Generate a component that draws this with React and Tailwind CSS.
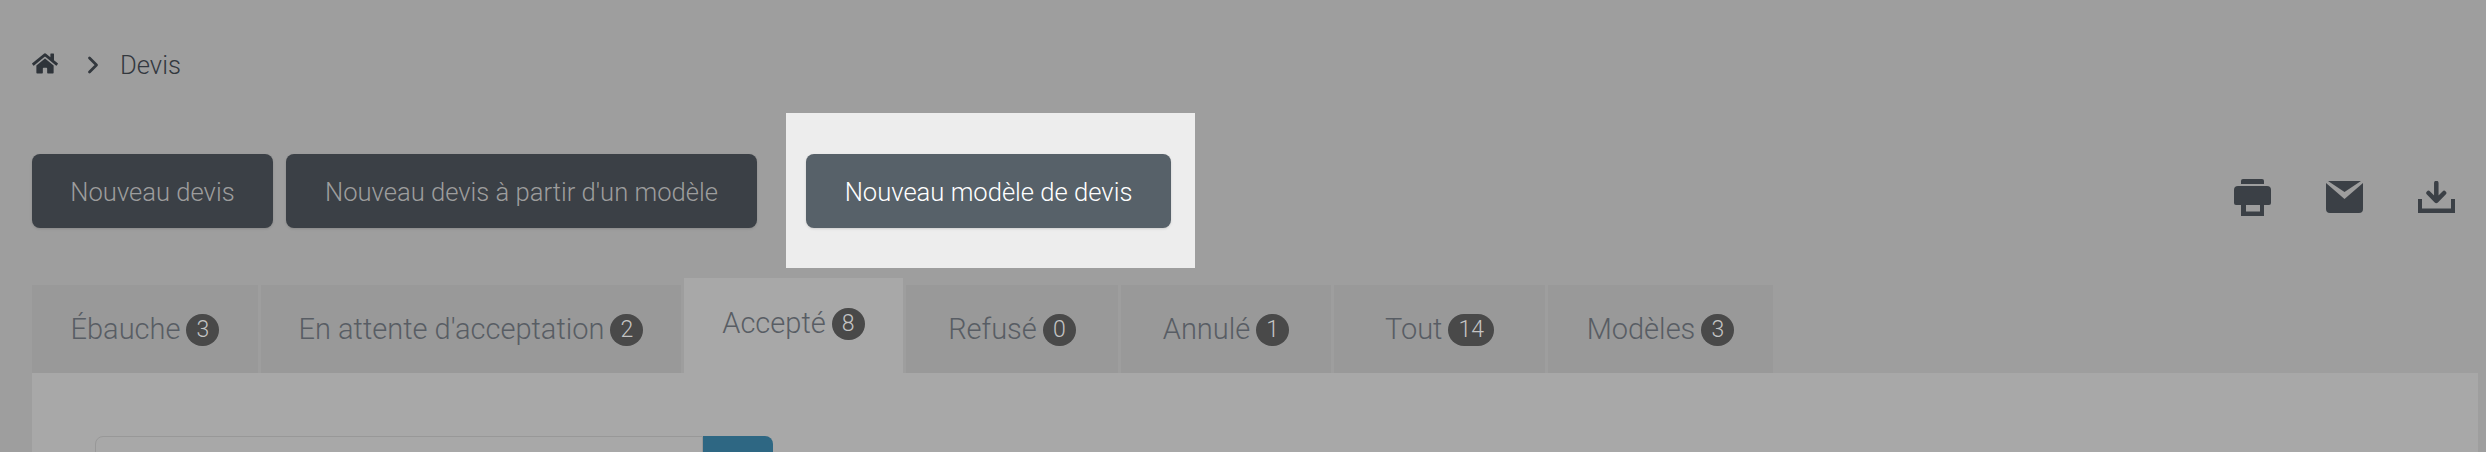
import { FaHome } from 'react-icons/fa';
import { ChevronRight } from 'lucide-react';

const tabs = [
  { label: 'Ébauche', count: 3, width: 'w-[226px]' },
  { label: "En attente d'acceptation", count: 2, width: 'w-[420px]' },
  { label: 'Accepté', count: 8, width: 'w-[219px]', active: true },
  { label: 'Refusé', count: 0, width: 'w-[212px]' },
  { label: 'Annulé', count: 1, width: 'w-[210px]' },
  { label: 'Tout', count: 14, width: 'w-[211px]' },
  { label: 'Modèles', count: 3, width: 'w-[225px]' },
];

const PrintIcon = () => (
  <svg width="37" height="37" viewBox="0 0 37 37" fill="#3b4046">
    <path d="M9 0h19a2 2 0 0 1 2 2v3H7V2a2 2 0 0 1 2-2z" />
    <path d="M4 7h29a4 4 0 0 1 4 4v13a2 2 0 0 1-2 2H2a2 2 0 0 1-2-2V11a4 4 0 0 1 4-4z" />
    <path fillRule="evenodd" d="M7 24h23v13H7zM12 26v6.500h14V26z" />
  </svg>
);

const MailIcon = () => (
  <svg width="37" height="32" viewBox="0 0 37 32" fill="#3b4046">
    <path d="M2 0h33L18.500 11z" />
    <path d="M0 2l18.500 16L37 2v26a4 4 0 0 1-4 4H4a4 4 0 0 1-4-4z" />
  </svg>
);

const DownloadIcon = () => (
  <svg width="37" height="32" viewBox="0 0 37 32" fill="#3b4046">
    <path d="M18.300 2v17M10.500 12l7.800 7.800 7.800-7.800" fill="none" stroke="#3b4046" strokeWidth="4.500" strokeLinecap="round" strokeLinejoin="round" />
    <path d="M0 18h4v9.500h29V18h4v14H0z" />
  </svg>
);

const TabItem = ({ label, count, width, active }) => (
  <div
    className={`flex items-center justify-center gap-[6px] text-[29px] font-light text-[#585d64] ${width} ${
      active ? 'h-[95px] bg-[#a8a8a8] pb-[3px]' : 'h-[88px] bg-[#999999] pt-[2px]'
    }`}
  >
    <span>{label}</span>
    <span className="flex h-[32px] min-w-[33px] items-center justify-center rounded-full bg-[#494949] px-[10px] text-[23px] text-[#c4c4c4]">
      {count}
    </span>
  </div>
);

export default function App() {
  return (
    <div className="h-[452px] w-[2486px] overflow-hidden bg-[#9e9e9e] pl-[32px] pr-[8px] font-['Roboto',sans-serif] font-light">
      <nav className="h-[113px] pt-[47px] text-[25.6px] text-[#33383e]">
        <div className="flex h-[36px] items-center">
          <FaHome className="-mt-[3px] h-[23px] w-[26px] text-[#2f343a]" />
          <ChevronRight className="ml-[21px] h-[28px] w-[28px] text-[#33383e]" strokeWidth={2.4} />
          <span className="ml-[13px]">Devis</span>
        </div>
      </nav>

      <div className="flex h-[155px] items-center">
        <div className="flex gap-[13px]">
          <button className="h-[74px] w-[241px] rounded-[8px] bg-[#3b4046] pt-[4px] text-[25.6px] text-[#9d9d9d] shadow-sm">
            Nouveau devis
          </button>
          <button className="h-[74px] w-[471px] rounded-[8px] bg-[#3b4046] pt-[4px] text-[25.6px] text-[#9d9d9d] shadow-sm">
            Nouveau devis à partir d'un modèle
          </button>
        </div>
        <div className="ml-[29px] flex h-[155px] w-[409px] items-center bg-[#ededed] pl-[20px]">
          <button className="h-[74px] w-[365px] rounded-[8px] bg-[#576169] pt-[4px] text-[25.6px] text-white shadow-sm">
            Nouveau modèle de devis
          </button>
        </div>
        <div className="ml-auto mr-[23px] mt-[13px] flex items-center gap-[55px]">
          <PrintIcon />
          <MailIcon />
          <DownloadIcon />
        </div>
      </div>

      <div className="mt-[10px] flex items-end gap-[3px]">
        {tabs.map((tab) => (
          <TabItem key={tab.label} {...tab} />
        ))}
      </div>

      <div className="h-[100px] bg-[#a8a8a8] pl-[63px] pt-[63px]">
        <div className="flex w-[678px]">
          <div className="h-[40px] w-[608px] rounded-tl-[8px] border border-[#989898]" />
          <div className="h-[40px] w-[70px] rounded-tr-[8px] bg-[#2e6783]" />
        </div>
      </div>
    </div>
  );
}
